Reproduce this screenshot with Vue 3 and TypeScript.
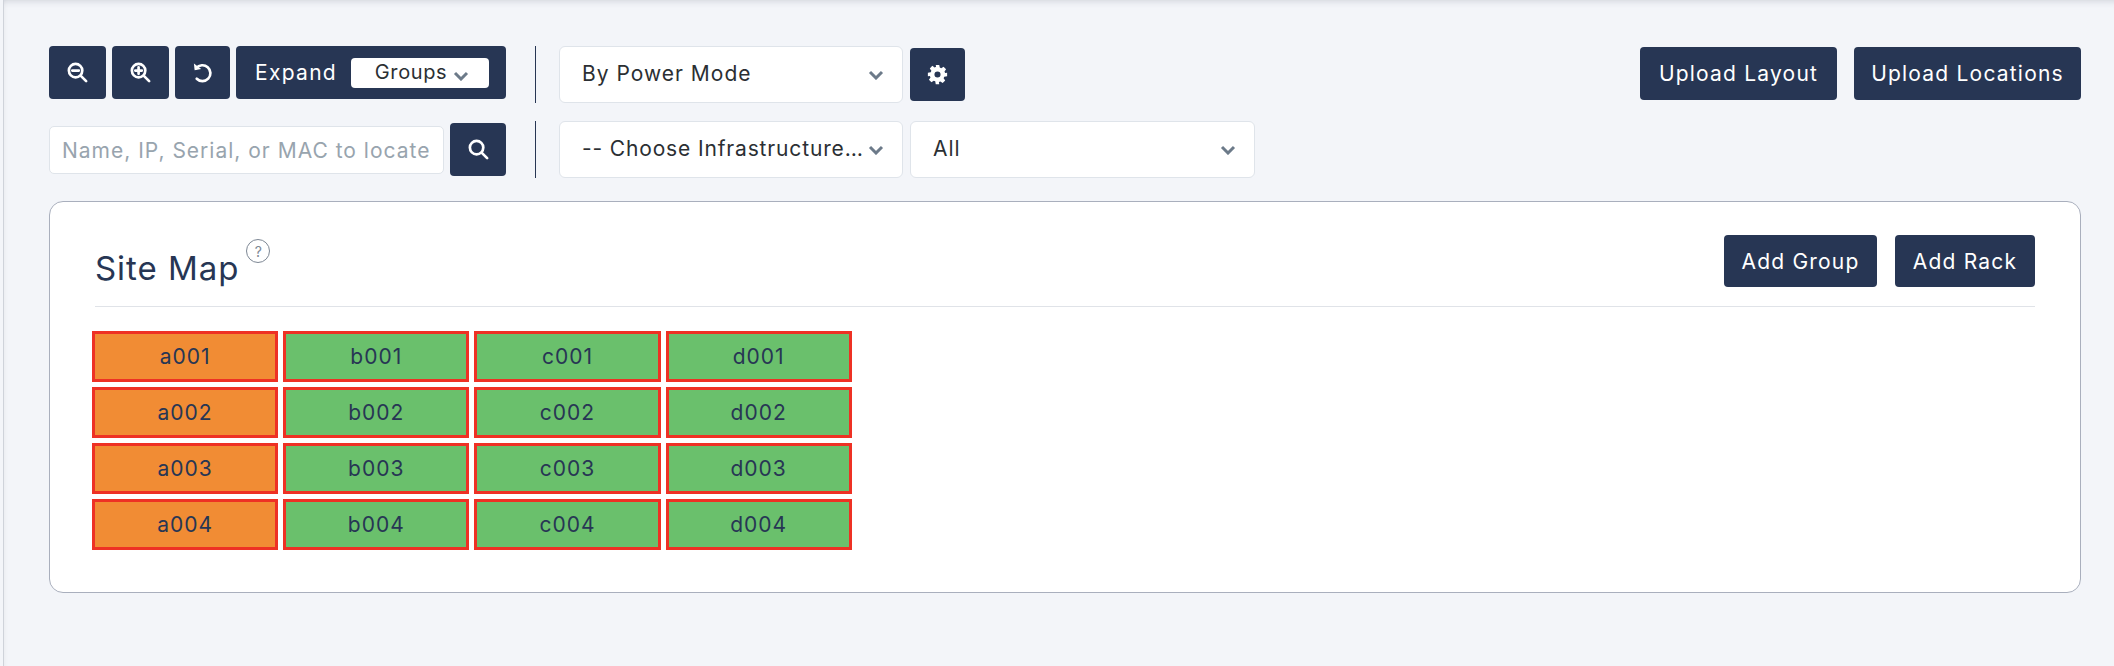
<script setup lang="ts">
const columns = ['a', 'b', 'c', 'd']
const rows = ['001', '002', '003', '004']
</script>

<template>
  <div class="page">
    <div class="toolbar">
      <div class="tools">
        <div class="tool-row">
          <div class="left-tools top">
            <button class="btn icon w57" aria-label="Zoom out">
              <svg viewBox="0 0 24 24" width="23" height="23"><circle cx="10" cy="10" r="7" class="stroke"/><path d="M15.5 15.5 21 21M6.6 10h6.8" class="stroke"/></svg>
            </button>
            <button class="btn icon w57" aria-label="Zoom in">
              <svg viewBox="0 0 24 24" width="23" height="23"><circle cx="10" cy="10" r="7" class="stroke"/><path d="M15.5 15.5 21 21M6.6 10h6.8M10 6.6v6.8" class="stroke"/></svg>
            </button>
            <button class="btn icon w55" aria-label="Reset">
              <svg viewBox="0 0 24 24" width="23" height="23"><path d="M5.5 7.5A8.3 8.3 0 1 1 6 18.5" class="stroke"/><path d="M3 2.5 3.8 9.6l6.8-1.3z" fill="#fff"/></svg>
            </button>
            <div class="btn expand">
              <span class="expand-label">Expand</span>
              <span class="groups"><span class="groups-label">Groups</span><svg class="chev small" viewBox="0 0 16 10"><path d="M2 2l6 6 6-6"/></svg></span>
            </div>
          </div>
          <i class="divider"></i>
          <div class="select"><span class="lift">By Power Mode</span><svg class="chev" viewBox="0 0 16 10"><path d="M2 2l6 6 6-6"/></svg></div>
          <button class="btn gear" aria-label="Settings">
            <svg viewBox="0 0 24 24" width="21" height="21"><path fill="#fff" fill-rule="evenodd" d="M10 1h4l.6 3.1 1.7.7 2.6-1.8 2.9 2.9-1.8 2.6.7 1.7L23 10v4l-3.3.6-.7 1.7 1.8 2.6-2.9 2.9-2.6-1.8-1.7.7L14 23h-4l-.6-3.3-1.7-.7-2.6 1.8-2.9-2.9 1.8-2.6-.7-1.7L1 14v-4l3.3-.6.7-1.7L3.2 5l2.9-2.9 2.6 1.8 1.7-.7zM12 8.5a3.5 3.5 0 1 0 0 7 3.5 3.5 0 0 0 0-7z"/></svg>
          </button>
        </div>
        <div class="tool-row">
          <div class="left-tools">
            <div class="search-input">Name, IP, Serial, or MAC to locate</div>
            <button class="btn icon search" aria-label="Search">
              <svg viewBox="0 0 24 24" width="23" height="23"><circle cx="10" cy="10" r="7" class="stroke"/><path d="M15.5 15.5 21 21" class="stroke"/></svg>
            </button>
          </div>
          <i class="divider"></i>
          <div class="select"><span class="lift tight">-- Choose Infrastructure…</span><svg class="chev" viewBox="0 0 16 10"><path d="M2 2l6 6 6-6"/></svg></div>
          <div class="select wide"><span class="lift">All</span><svg class="chev" viewBox="0 0 16 10"><path d="M2 2l6 6 6-6"/></svg></div>
        </div>
      </div>
      <div class="uploads">
        <button class="btn w197">Upload Layout</button>
        <button class="btn w227">Upload Locations</button>
      </div>
    </div>

    <section class="card">
      <header class="card-head">
        <h1>Site Map<span class="help">?</span></h1>
        <div class="card-actions">
          <button class="btn short w153">Add Group</button>
          <button class="btn short w140">Add Rack</button>
        </div>
      </header>
      <div class="racks">
        <template v-for="r in rows" :key="r">
          <div v-for="c in columns" :key="c + r" class="rack" :class="{ warn: c === 'a' }">{{ c + r }}</div>
        </template>
      </div>
    </section>
  </div>
</template>

<style>
html, body { margin: 0; background: #f3f5f9; }
</style>

<style scoped>
.page {
  box-sizing: border-box;
  width: 2111px;
  height: 666px;
  margin-left: 3px;
  padding: 46px 33px 0 45px;
  background: #f3f5f9;
  border-left: 1px solid #cfd3da;
  box-shadow: inset 0 8px 7px -7px rgba(60, 70, 90, .2), inset 4px 0 4px -4px rgba(60, 70, 90, .08);
  font-family: Inter, "Liberation Sans", sans-serif;
  font-size: 21px;
  letter-spacing: 1px;
  color: #2b2f33;
  overflow: hidden;
}
.toolbar { display: flex; justify-content: space-between; }
.tools { display: flex; flex-direction: column; gap: 18px; }
.tool-row { display: flex; align-items: center; gap: 7px; height: 57px; }
.left-tools { display: flex; align-items: center; gap: 6px; width: 457px; }
.left-tools.top { align-self: flex-start; }
.divider { width: 1px; height: 57px; background: #273654; margin: 0 16px 0 22px; }
.btn {
  display: flex; align-items: center; justify-content: center;
  height: 53px; border: 0; border-radius: 4px; padding: 0;
  background: #273654; color: #fff; font: inherit; letter-spacing: 1.2px; white-space: nowrap;
}
.stroke { fill: none; stroke: #fff; stroke-width: 2.8; stroke-linecap: round; }
.w57 { width: 57px; }
.w55 { width: 55px; }
.w197 { width: 197px; }
.w227 { width: 227px; }
.w153 { width: 153px; }
.w140 { width: 140px; }
.expand { box-sizing: border-box; width: 270px; justify-content: space-between; padding: 0 17px 0 19px; }
.expand-label { letter-spacing: 1.3px; }
.groups {
  display: flex; align-items: center; justify-content: center; gap: 6px;
  width: 138px; height: 30px; padding-left: 4px; box-sizing: border-box;
  background: #fff; color: #2b2f33; border-radius: 4px; font-size: 20px; letter-spacing: .6px;
}
.groups-label { margin-top: -2px; }
.chev { width: 16px; height: 10px; flex: none; }
.chev path { fill: none; stroke: #6c7a89; stroke-width: 3; }
.chev.small { margin-top: 6px; }
.select {
  box-sizing: border-box; display: flex; align-items: center; justify-content: space-between;
  width: 344px; height: 57px; padding: 0 18px 0 22px;
  background: #fff; border: 1px solid #dfe4ea; border-radius: 6px; white-space: nowrap;
}
.select.wide { width: 345px; }
.lift { margin-top: -2px; }
.tight { letter-spacing: .85px; }
.gear { width: 55px; }
.search-input {
  box-sizing: border-box; display: flex; align-items: center;
  width: 395px; height: 48px; padding: 2px 0 0 12px; background: #fff;
  border: 1px solid #dfe4ea; border-radius: 5px; color: #98a4ae; white-space: nowrap;
}
.search { width: 56px; }
.uploads { display: flex; gap: 17px; margin-top: 1px; }
.card {
  box-sizing: border-box; width: 2032px; height: 392px; margin-top: 23px;
  padding: 33px 45px 0 42px; background: #fff; border: 1px solid #a9afbd; border-radius: 14px;
}
.card-head {
  display: flex; justify-content: space-between; align-items: flex-start;
  height: 71px; margin-left: 3px; border-bottom: 1px solid #e0e3e8;
}
h1 { margin: 13px 0 0; font-size: 33px; font-weight: 400; letter-spacing: .95px; color: #273654; display: flex; align-items: flex-start; }
.help {
  box-sizing: border-box; width: 24px; height: 24px; margin: -9px 0 0 7px; border: 1px solid #7d8794; border-radius: 50%;
  display: flex; align-items: center; justify-content: center; color: #7d8794; font-size: 14px; letter-spacing: 0;
}
.card-actions { display: flex; gap: 18px; }
.short { height: 52px; }
.racks {
  display: grid; grid-template-columns: repeat(4, 186.2px); gap: 5px; margin-top: 24px; width: max-content;
}
.rack {
  box-sizing: border-box; height: 51px; border: 3px solid #ee3124; background: #6ac06c;
  display: flex; align-items: center; justify-content: center; color: #273654;
}
.warn { background: #f18c34; }
</style>
